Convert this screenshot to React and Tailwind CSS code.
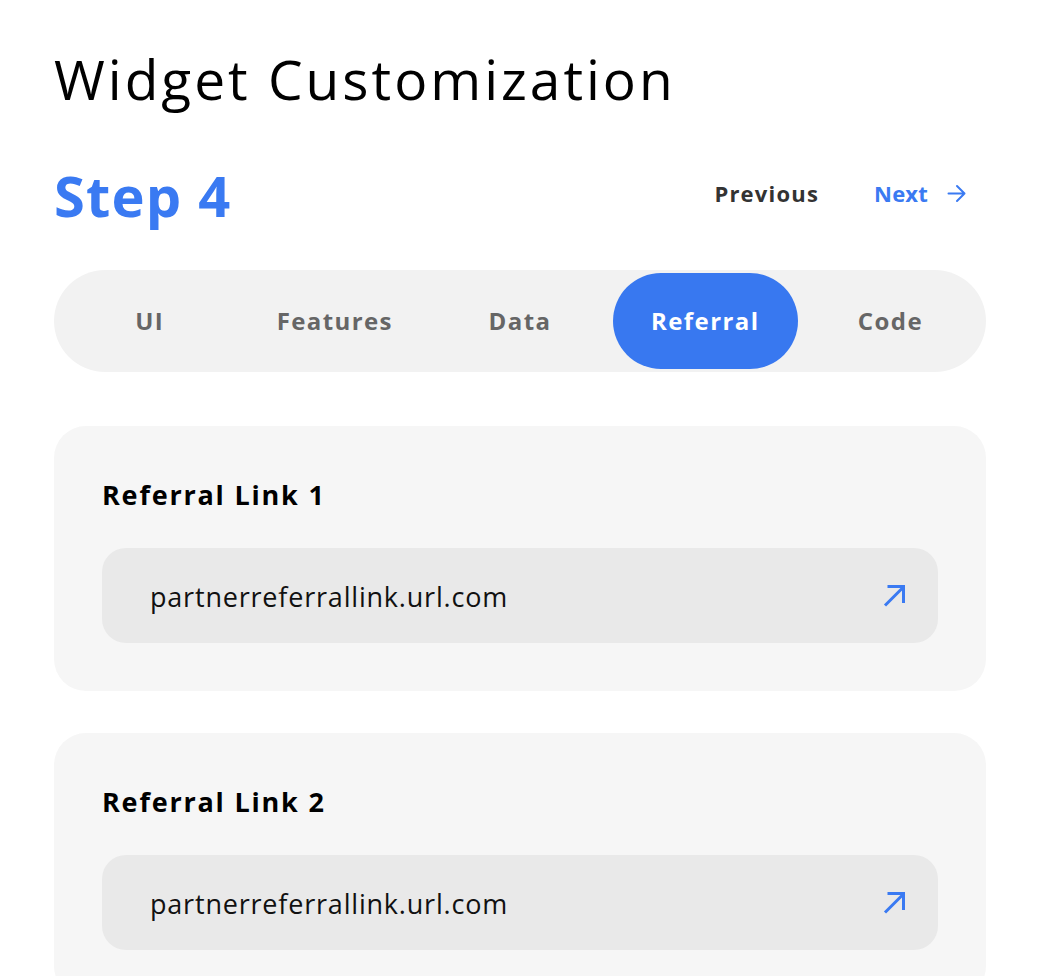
const TABS = ['UI', 'Features', 'Data', 'Referral', 'Code']
const LINKS = ['Referral Link 1', 'Referral Link 2']

function NextArrow() {
  return (
    <svg width="19" height="19" viewBox="0 0 19 19" fill="none" stroke="currentColor" strokeWidth="2" strokeLinecap="round" strokeLinejoin="round">
      <path d="M1.5 9.5H17.5M10 2L17.5 9.5L10 17" />
    </svg>
  )
}

function OpenArrow() {
  return (
    <svg width="23" height="23" viewBox="0 0 23 23" fill="none" stroke="#3a7af2" strokeWidth="3" strokeLinecap="butt" strokeLinejoin="miter">
      <path d="M2 21.5L20.5 3M4.5 2.5H20.5V19" />
    </svg>
  )
}

export default function App() {
  return (
    <div
      className="w-[1040px] h-[976px] overflow-hidden bg-white px-[54px]"
      style={{ fontFamily: '"Open Sans", "Liberation Sans", sans-serif' }}
    >
      <h1 className="pt-[46px] text-[55px] leading-[66px] font-normal text-black tracking-[3px]">
        Widget Customization
      </h1>

      <div className="mt-[49px] flex items-center justify-between">
        <div className="text-[56px] leading-[68px] font-bold text-[#3a7af2] tracking-[1.2px]">Step 4</div>
        <div className="flex items-center gap-[55px] pr-[20px] -mt-[4px]">
          <button className="text-[22px] font-bold text-[#333333] tracking-[1.2px]">Previous</button>
          <button className="flex items-center gap-[19px] text-[22px] font-bold text-[#3a7af2] tracking-[0.2px]">
            Next
            <NextArrow />
          </button>
        </div>
      </div>

      <div className="mt-[41px] h-[102px] rounded-full bg-[#f2f2f2] p-[3px] flex">
        {TABS.map((t) => (
          <div
            key={t}
            className={`flex-1 flex items-center justify-center rounded-full text-[24px] font-bold tracking-[1.4px] pb-[1px] ${
              t === 'Referral' ? 'bg-[#3878f0] text-white' : 'text-[#666666]'
            }`}
          >
            {t}
          </div>
        ))}
      </div>

      <div className="mt-[54px] flex flex-col gap-[42px]">
        {LINKS.map((l) => (
          <div key={l} className="rounded-[32px] bg-[#f6f6f6] px-[48px] pt-[49px] pb-[48px]">
            <div className="text-[27px] leading-[40px] font-bold text-black tracking-[1.8px]">{l}</div>
            <div className="mt-[33px] h-[95px] rounded-[24px] bg-[#e9e9e9] flex items-center justify-between pl-[48px] pr-[32px]">
              <span className="text-[27px] text-[#111111] tracking-[0.8px] pt-[3px]">partnerreferrallink.url.com</span>
              <OpenArrow />
            </div>
          </div>
        ))}
      </div>
    </div>
  )
}
